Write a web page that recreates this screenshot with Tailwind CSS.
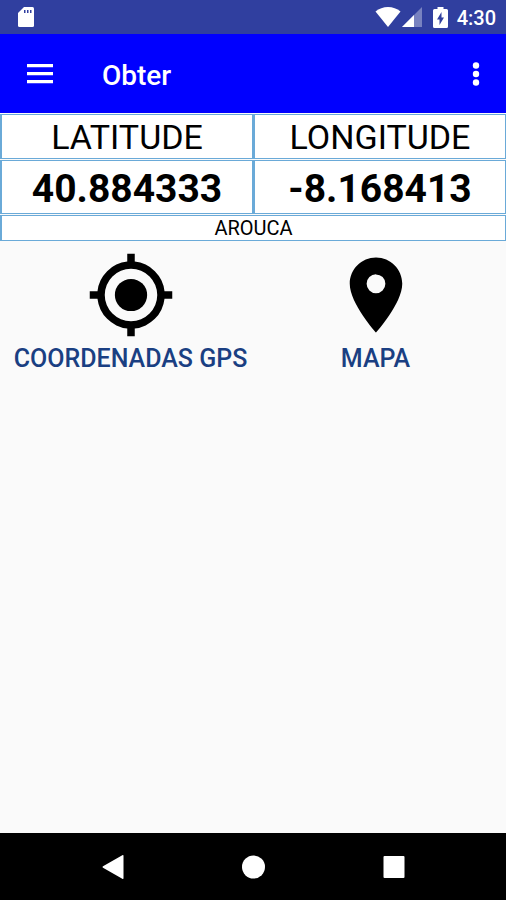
<!DOCTYPE html>
<html lang="pt">
<head>
    <meta charset="UTF-8">
    <meta name="viewport" content="width=device-width, initial-scale=1.0">
    <title>Obter</title>
    <script src="https://cdn.jsdelivr.net/npm/@tailwindcss/browser@4"></script>
</head>
<body class="min-h-screen flex flex-col bg-[#fafafa] text-black font-['Roboto',sans-serif]">
    <!-- Status bar -->
    <div class="h-[34px] pl-[17px] pr-[10px] flex justify-between items-center bg-[#303f9f] text-white">
        <svg class="w-[18px] h-[22px]" viewBox="0 0 18 22" fill="currentColor">
            <path d="M7 1h8.500a1.500 1.500 0 0 1 1.500 1.500v17a1.500 1.500 0 0 1-1.500 1.500h-13A1.500 1.500 0 0 1 1 19.500V7z"/>
            <path d="M7 4h1.500v3H7zM10 4h1.500v3H10zM13 4h1.500v3H13z" fill="#303f9f"/>
        </svg>
        <div class="flex items-center">
            <svg class="w-[26px] h-[20px]" viewBox="0 0 26 20" fill="currentColor">
                <path d="M13 20L.5 4.500C4 1.500 8.300 0 13 0s9 1.500 12.500 4.500z"/>
            </svg>
            <svg class="ml-px w-[20px] h-[20px]" viewBox="0 0 20 20" fill="currentColor">
                <path d="M0 20L20 0v20z" opacity=".35"/>
                <path d="M0 20L12 8v12z"/>
            </svg>
            <svg class="ml-[11px] w-[15px] h-[21px]" viewBox="0 0 15 21" fill="currentColor">
                <path d="M4.500 2V0h6v2h3A1.500 1.500 0 0 1 15 3.500v16a1.500 1.500 0 0 1-1.500 1.500h-12A1.500 1.500 0 0 1 0 19.500v-16A1.500 1.500 0 0 1 1.500 2z"/>
                <path d="M8.500 5L4 12.500h2.500V18l4.500-7.500H8.500z" fill="#303f9f"/>
            </svg>
            <span class="ml-[9px] pt-px text-[20px] leading-6 font-medium">4:30</span>
        </div>
    </div>

    <!-- Toolbar -->
    <header class="h-[79px] px-[26px] flex items-center bg-[#0000ff] text-white">
        <button type="button" aria-label="Menu">
            <svg class="w-[28px] h-[20px]" viewBox="0 0 28 20" fill="currentColor">
                <path d="M1 0h26v3.200H1zM1 8h26v3.200H1zM1 16h26v3.200H1z"/>
            </svg>
        </button>
        <h1 class="ml-12 mt-1 grow text-[28px] leading-8 font-medium">Obter</h1>
        <button type="button" aria-label="Mais opções">
            <svg class="w-[8px] h-[24px]" viewBox="0 0 8 24" fill="currentColor">
                <circle cx="4" cy="3.500" r="3.200"/>
                <circle cx="4" cy="12" r="3.200"/>
                <circle cx="4" cy="20.500" r="3.200"/>
            </svg>
        </button>
    </header>

    <!-- Coordinates -->
    <table class="w-full table-fixed border-separate border-spacing-x-0 border-spacing-y-px text-center">
        <tr>
            <th class="h-[45px] p-0 border border-l-2 border-[#6aaad8] bg-white text-[34px] leading-[42px] font-normal">LATITUDE</th>
            <th class="h-[45px] p-0 border border-l-2 border-[#6aaad8] bg-white text-[34px] leading-[42px] font-normal">LONGITUDE</th>
        </tr>
        <tr>
            <td class="h-[54px] p-0 pt-1 border border-l-2 border-[#6aaad8] bg-white text-[39px] leading-[48px] font-bold">40.884333</td>
            <td class="h-[54px] p-0 pt-1 border border-l-2 border-[#6aaad8] bg-white text-[39px] leading-[48px] font-bold">-8.168413</td>
        </tr>
        <tr>
            <td colspan="2" class="h-[26px] p-0 border border-l-2 border-[#6aaad8] bg-white text-[20px] leading-6">AROUCA</td>
        </tr>
    </table>

    <!-- Actions -->
    <main class="grow px-2 pt-2">
        <div class="grid grid-cols-2 text-[25px] leading-8 font-medium text-[#1a3f82]">
            <button type="button" class="flex flex-col items-center gap-[3px] whitespace-nowrap">
                <svg class="w-[90px] h-[90px] text-black" viewBox="0 0 24 24" fill="currentColor">
                    <circle cx="12" cy="12" r="4.300"/>
                    <path d="M20.940 11A8.990 8.990 0 0 0 13 3.060V1h-2v2.060A8.990 8.990 0 0 0 3.060 11H1v2h2.060A8.990 8.990 0 0 0 11 20.940V23h2v-2.060A8.990 8.990 0 0 0 20.940 13H23v-2zM12 19a7 7 0 1 1 0-14 7 7 0 0 1 0 14z"/>
                </svg>
                COORDENADAS GPS
            </button>
            <button type="button" class="flex flex-col items-center gap-[3px]">
                <svg class="w-[90px] h-[90px] text-black" viewBox="0 0 24 24" fill="currentColor">
                    <path d="M12 2C8.130 2 5 5.130 5 9c0 5.250 7 13 7 13s7-7.750 7-13c0-3.870-3.130-7-7-7zm0 9.500a2.500 2.500 0 1 1 0-5 2.500 2.500 0 0 1 0 5z"/>
                </svg>
                MAPA
            </button>
        </div>
    </main>

    <!-- Navigation bar -->
    <nav class="h-[67px] px-[42px] grid grid-cols-3 place-items-center bg-black text-white">
        <button type="button" aria-label="Voltar">
            <svg class="w-[24px] h-[24px]" viewBox="0 0 24 24" fill="currentColor">
                <path d="M23.500.8v22.400a.8.8 0 0 1-1.200.6L3 12.700a.8.8 0 0 1 0-1.400L22.300.2a.8.8 0 0 1 1.200.6z"/>
            </svg>
        </button>
        <button type="button" aria-label="Início">
            <svg class="w-[24px] h-[24px]" viewBox="0 0 24 24" fill="currentColor"><circle cx="12.500" cy="12" r="11.500"/></svg>
        </button>
        <button type="button" aria-label="Recentes">
            <svg class="w-[24px] h-[24px]" viewBox="0 0 24 24" fill="currentColor"><rect x="1.500" y="1" width="21" height="22" rx="1"/></svg>
        </button>
    </nav>
</body>
</html>
